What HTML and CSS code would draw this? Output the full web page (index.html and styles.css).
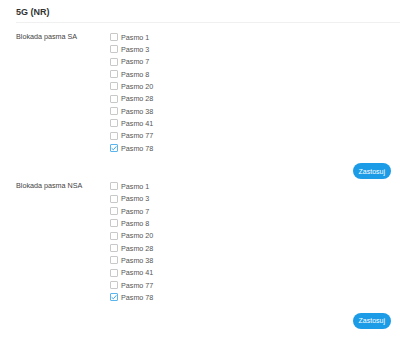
FILE: index.html
```html
<!DOCTYPE html>
<html lang="pl">
<head>
    <meta charset="UTF-8">
    <title>5G (NR)</title>
    <link rel="stylesheet" href="styles.css">
</head>
<body>
    <div class="page">
        <h1 class="title">5G (NR)</h1>

        <!-- SA band lock -->
        <form class="section">
            <div class="label">Blokada pasma SA</div>
            <ul class="bands">
                <li><span class="box"></span>Pasmo 1</li>
                <li><span class="box"></span>Pasmo 3</li>
                <li><span class="box"></span>Pasmo 7</li>
                <li><span class="box"></span>Pasmo 8</li>
                <li><span class="box"></span>Pasmo 20</li>
                <li><span class="box"></span>Pasmo 28</li>
                <li><span class="box"></span>Pasmo 38</li>
                <li><span class="box"></span>Pasmo 41</li>
                <li><span class="box"></span>Pasmo 77</li>
                <li><span class="box checked"><svg viewBox="0 0 8 8"><path d="M1.6 4.2 L3.3 5.8 L6.4 2.3" /></svg></span>Pasmo 78</li>
            </ul>
            <div class="actions"><button type="button" class="btn">Zastosuj</button></div>
        </form>

        <!-- NSA band lock -->
        <form class="section">
            <div class="label">Blokada pasma NSA</div>
            <ul class="bands">
                <li><span class="box"></span>Pasmo 1</li>
                <li><span class="box"></span>Pasmo 3</li>
                <li><span class="box"></span>Pasmo 7</li>
                <li><span class="box"></span>Pasmo 8</li>
                <li><span class="box"></span>Pasmo 20</li>
                <li><span class="box"></span>Pasmo 28</li>
                <li><span class="box"></span>Pasmo 38</li>
                <li><span class="box"></span>Pasmo 41</li>
                <li><span class="box"></span>Pasmo 77</li>
                <li><span class="box checked"><svg viewBox="0 0 8 8"><path d="M1.6 4.2 L3.3 5.8 L6.4 2.3" /></svg></span>Pasmo 78</li>
            </ul>
            <div class="actions"><button type="button" class="btn">Zastosuj</button></div>
        </form>
    </div>
</body>
</html>
```

FILE: styles.css
```css
body {
    margin: 0;
    background-color: #fff;
    font-family: "Liberation Sans", Arial, sans-serif;
    color: #555;
}
.page {
    padding: 7px 0 0 16px;
}
.title {
    margin: 0;
    font-size: 9px;
    line-height: 11px;
    font-weight: bold;
    color: #333;
    padding-bottom: 4px;
    border-bottom: 1px solid #f0f0f0;
}
.section {
    display: grid;
    grid-template-columns: 94px 1fr;
    margin: 8px 9px 0 0;
    font-size: 7.2px;
}
.section + .section {
    margin-top: 1px;
}
.label {
    line-height: 12.33px;
    color: #444;
}
.bands {
    list-style: none;
    margin: 0;
    padding: 0;
}
.bands li {
    display: flex;
    align-items: center;
    gap: 3px;
    height: 12.33px;
}
.box {
    width: 8px;
    height: 8px;
    box-sizing: border-box;
    border: 1px solid #c8c8c8;
    border-radius: 1px;
    background-color: #fff;
}
.box.checked {
    border-color: #5ab4ee;
    position: relative;
}
.box svg {
    position: absolute;
    left: -1px;
    top: -1px;
    width: 8px;
    height: 8px;
    fill: none;
    stroke: #2a9be6;
    stroke-width: 0.9;
}
.actions {
    grid-column: 1 / 3;
    display: flex;
    justify-content: flex-end;
    margin-top: 9px;
}
.btn {
    height: 16px;
    padding: 0 6px;
    border: none;
    border-radius: 8px;
    background-color: #1c9be6;
    color: #fff;
    font-family: inherit;
    font-size: 7px;
    cursor: pointer;
}
```
